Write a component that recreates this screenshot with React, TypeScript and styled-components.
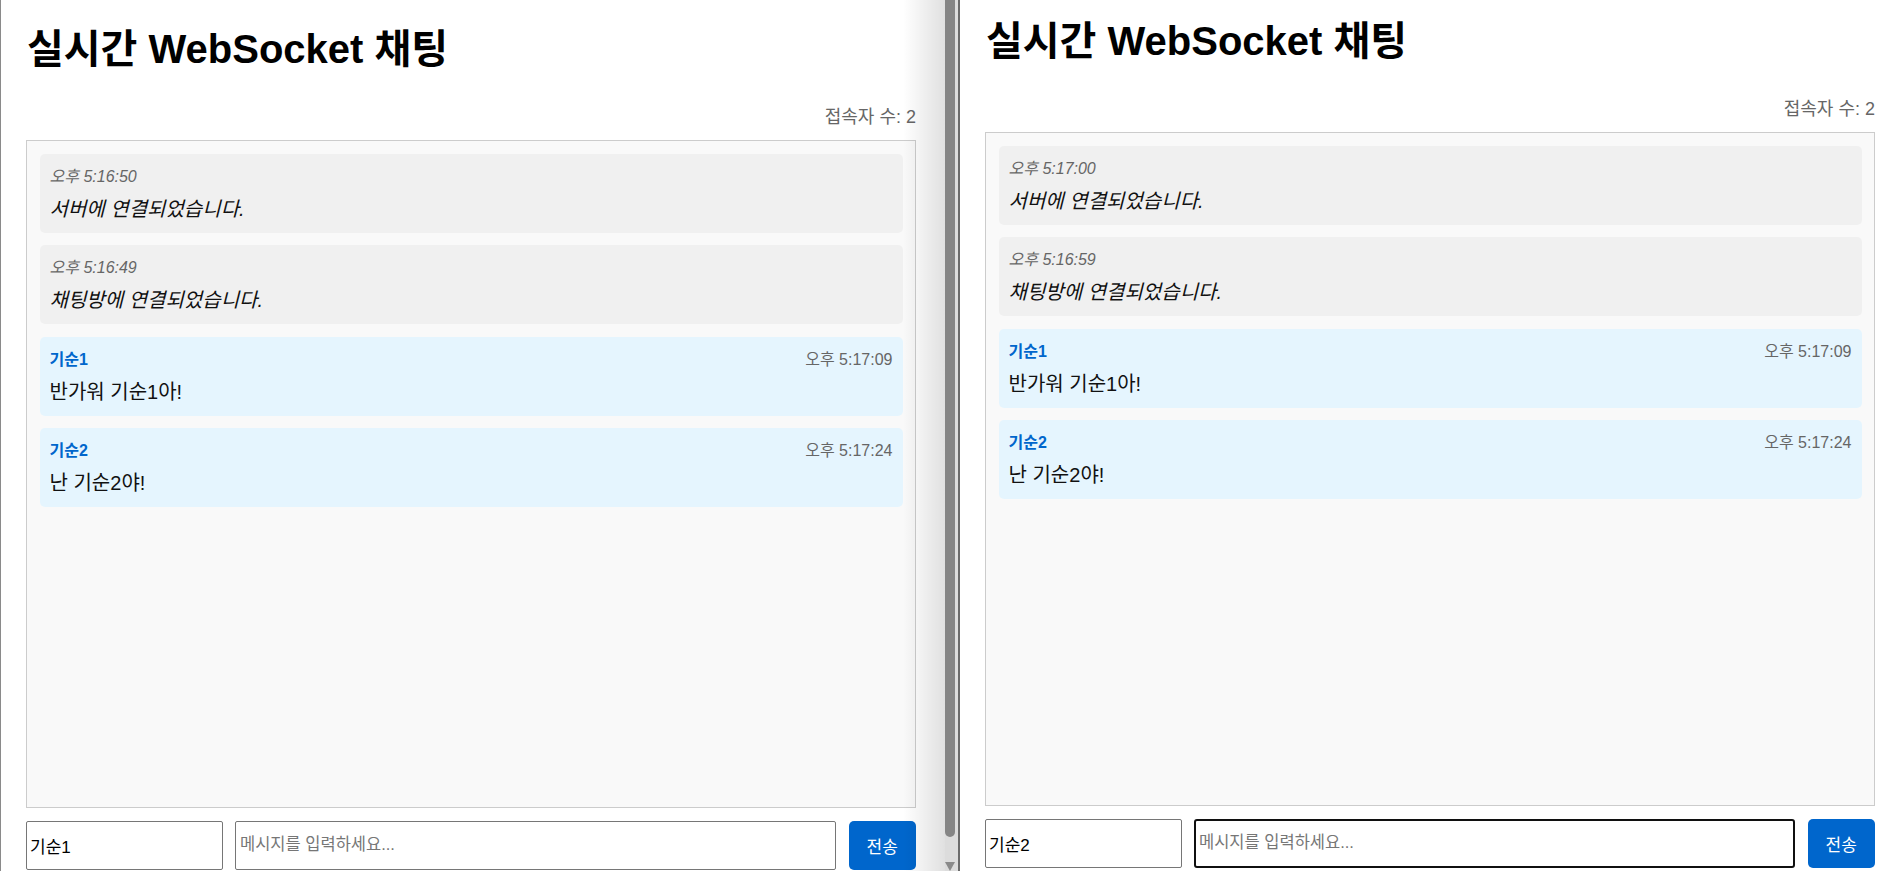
import styled, { createGlobalStyle } from "styled-components";

const GlobalStyle = createGlobalStyle`
  html, body {
    margin: 0;
    padding: 0;
    overflow: hidden;
    background: #fff;
  }
  body {
    font-family: "Liberation Sans", Arial, "Noto Sans CJK KR", sans-serif;
    color: #000;
  }
  * {
    box-sizing: border-box;
  }
`;

const Desktop = styled.div`
  display: flex;
  width: 100%;
  height: 871px;
  overflow: hidden;
`;

const LeftWindow = styled.div`
  display: flex;
  width: 960px;
  flex-shrink: 0;
  height: 100%;
  border-left: 1px solid #8a8a8a;
`;

const RightWindow = styled.div`
  flex: 1;
  height: 100%;
  overflow: hidden;
`;

const Viewport = styled.div<{ $shadow?: boolean }>`
  position: relative;
  flex: 1;
  height: 100%;
  overflow: hidden;

  ${(p) =>
    p.$shadow &&
    `
    &::after {
      content: "";
      position: absolute;
      top: 0;
      right: 0;
      bottom: 0;
      width: 42px;
      background: linear-gradient(to right, rgba(0, 0, 0, 0), rgba(0, 0, 0, 0.12));
      pointer-events: none;
    }
  `}
`;

const Gutter = styled.div`
  width: 13px;
  height: 100%;
  background: #dcdcdc;
  display: flex;
  flex-direction: column;
`;

const Thumb = styled.div`
  width: 10px;
  height: 837px;
  background: #858585;
  border-radius: 0 0 5px 5px;
`;

const ArrowDown = styled.div`
  margin-top: auto;
  width: 0;
  height: 0;
  border-left: 5.5px solid transparent;
  border-right: 5.5px solid transparent;
  border-top: 9px solid #8a8a8a;
`;

const Edge = styled.div`
  width: 2px;
  height: 100%;
  background: #6b6b6b;
`;

const Page = styled.div<{ $top: number }>`
  width: 890px;
  margin-left: 25px;
  padding-top: ${(p) => p.$top}px;
  display: flex;
  flex-direction: column;
`;

const Title = styled.h1`
  margin: 0;
  font-size: 40px;
  line-height: 46px;
  font-weight: bold;
  padding-left: 1px;
`;

const UserCount = styled.div`
  margin-top: 35px;
  text-align: right;
  color: #666;
  font-size: 18px;
  line-height: 20px;
`;

const ChatBox = styled.div<{ $height: number }>`
  margin-top: 13px;
  height: ${(p) => p.$height}px;
  border: 1px solid #ccc;
  background: #f9f9f9;
  padding: 12.5px;
  display: flex;
  flex-direction: column;
  gap: 12.5px;
  overflow: hidden;
`;

const Message = styled.div<{ $system?: boolean }>`
  height: 79px;
  padding: 12px 10px;
  border-radius: 5px;
  background: ${(p) => (p.$system ? "#f0f0f0" : "#e5f5fe")};
  flex-shrink: 0;
`;

const MessageHead = styled.div`
  display: flex;
  justify-content: space-between;
  align-items: baseline;
  height: 22px;
  line-height: 22px;
  margin-bottom: 10px;
  font-size: 16px;
`;

const Sender = styled.span`
  color: #0066cc;
  font-weight: bold;
`;

const Time = styled.span<{ $system?: boolean }>`
  color: #666;
  font-style: ${(p) => (p.$system ? "italic" : "normal")};
`;

const MessageText = styled.div<{ $system?: boolean }>`
  font-size: 20px;
  line-height: 23px;
  color: #111;
  font-style: ${(p) => (p.$system ? "italic" : "normal")};
`;

const InputRow = styled.div`
  margin-top: 12.5px;
  display: flex;
  gap: 12.5px;
  height: 49px;
`;

const TextInput = styled.input<{ $focused?: boolean; $grow?: boolean }>`
  height: 49px;
  width: ${(p) => (p.$grow ? "auto" : "196.5px")};
  flex: ${(p) => (p.$grow ? "1" : "none")};
  min-width: 0;
  border: ${(p) => (p.$focused ? "2px solid #101010" : "1px solid #767676")};
  border-radius: ${(p) => (p.$focused ? "3px" : "2px")};
  padding: 0 ${(p) => (p.$grow ? (p.$focused ? "3px" : "4px") : "3px")};
  font-family: "Liberation Sans", Arial, "Noto Sans CJK KR", sans-serif;
  font-size: 17px;
  color: #000;
  background: #fff;
  outline: none;

  &::placeholder {
    color: #767676;
    font-size: 16.5px;
  }
`;

const SendButton = styled.button`
  width: 67.5px;
  height: 49px;
  border: none;
  border-radius: 5px;
  background: #0066cc;
  color: #fff;
  font-family: "Liberation Sans", Arial, "Noto Sans CJK KR", sans-serif;
  font-size: 17px;
  padding: 0;
`;

type ChatItem =
  | { kind: "system"; time: string; text: string }
  | { kind: "user"; name: string; time: string; text: string };

function ChatPage({
  top,
  chatHeight,
  items,
  me,
  focused,
}: {
  top: number;
  chatHeight: number;
  items: ChatItem[];
  me: string;
  focused?: boolean;
}) {
  return (
    <Page $top={top}>
      <Title>실시간 WebSocket 채팅</Title>
      <UserCount>접속자 수: 2</UserCount>
      <ChatBox $height={chatHeight}>
        {items.map((m, i) =>
          m.kind === "system" ? (
            <Message key={i} $system>
              <MessageHead>
                <Time $system>{m.time}</Time>
              </MessageHead>
              <MessageText $system>{m.text}</MessageText>
            </Message>
          ) : (
            <Message key={i}>
              <MessageHead>
                <Sender>{m.name}</Sender>
                <Time>{m.time}</Time>
              </MessageHead>
              <MessageText>{m.text}</MessageText>
            </Message>
          )
        )}
      </ChatBox>
      <InputRow>
        <TextInput defaultValue={me} />
        <TextInput $grow $focused={focused} placeholder="메시지를 입력하세요..." />
        <SendButton>전송</SendButton>
      </InputRow>
    </Page>
  );
}

const userMessages: ChatItem[] = [
  { kind: "user", name: "기순1", time: "오후 5:17:09", text: "반가워 기순1아!" },
  { kind: "user", name: "기순2", time: "오후 5:17:24", text: "난 기순2야!" },
];

const leftItems: ChatItem[] = [
  { kind: "system", time: "오후 5:16:50", text: "서버에 연결되었습니다." },
  { kind: "system", time: "오후 5:16:49", text: "채팅방에 연결되었습니다." },
  ...userMessages,
];

const rightItems: ChatItem[] = [
  { kind: "system", time: "오후 5:17:00", text: "서버에 연결되었습니다." },
  { kind: "system", time: "오후 5:16:59", text: "채팅방에 연결되었습니다." },
  ...userMessages,
];

export default function App() {
  return (
    <>
      <GlobalStyle />
      <Desktop>
        <LeftWindow>
          <Viewport $shadow>
            <ChatPage top={26} chatHeight={668} items={leftItems} me="기순1" />
          </Viewport>
          <Gutter>
            <Thumb />
            <ArrowDown />
          </Gutter>
          <Edge />
        </LeftWindow>
        <RightWindow>
          <Viewport>
            <ChatPage top={18} chatHeight={674} items={rightItems} me="기순2" focused />
          </Viewport>
        </RightWindow>
      </Desktop>
    </>
  );
}
